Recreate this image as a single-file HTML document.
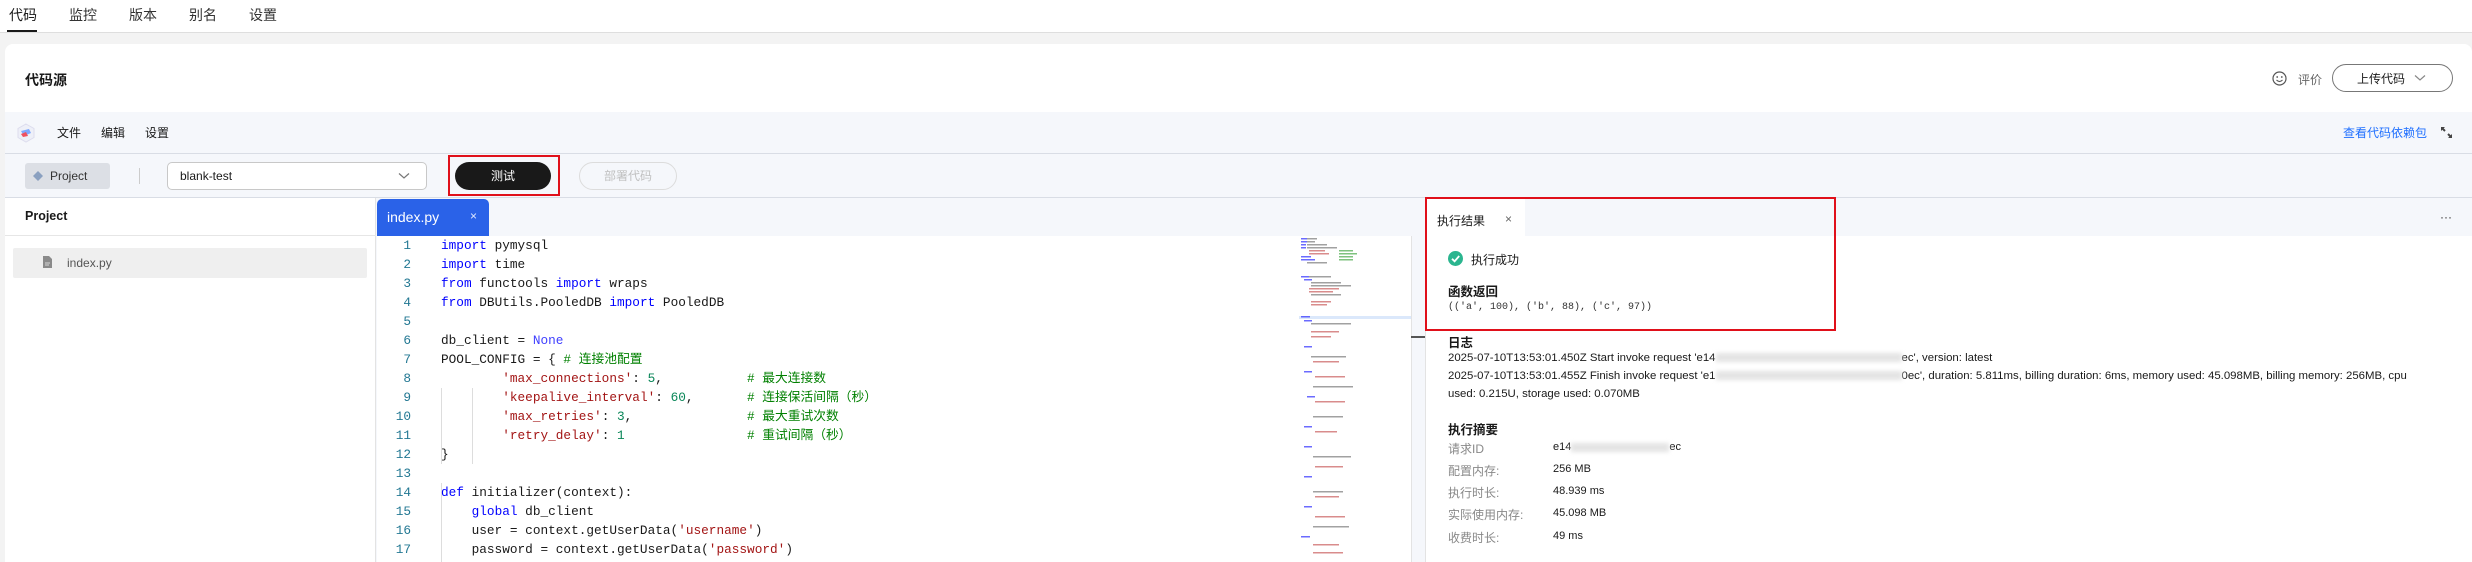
<!DOCTYPE html>
<html><head><meta charset="utf-8"><style>
*{margin:0;padding:0;box-sizing:border-box}
body{width:2472px;height:562px;overflow:hidden;background:#f3f3f3;font-family:"Liberation Sans","Noto Sans CJK SC",sans-serif;color:#191919;position:relative}
.a{position:absolute;white-space:nowrap}
.code{font-family:"Liberation Mono","Noto Sans CJK SC",monospace;font-size:12.75px;line-height:19px}
pre.a{white-space:pre}
.k{color:#0000ff}.s{color:#a31515}.n{color:#098658}.c{color:#008000}.nn{color:#4040ff}
.ln{color:#237893;text-align:right;width:40px;left:371px}
.lab{color:#888;font-size:12px}
.val{font-size:11px;color:#191919}
.lg{font-size:11.4px;color:#191919}
.bl{display:inline-block;vertical-align:middle;height:9px;background:#e4e4e4;filter:blur(2px)}
</style></head><body>
<!-- top tabs -->
<div class="a" style="left:0;top:0;width:2472px;height:33px;background:#fff;border-bottom:1px solid #dedede"></div>
<div class="a" style="left:9px;top:5px;font-size:14px;color:#191919">代码</div>
<div class="a" style="left:69px;top:5px;font-size:14px;color:#333">监控</div>
<div class="a" style="left:129px;top:5px;font-size:14px;color:#333">版本</div>
<div class="a" style="left:189px;top:5px;font-size:14px;color:#333">别名</div>
<div class="a" style="left:249px;top:5px;font-size:14px;color:#333">设置</div>
<div class="a" style="left:7px;top:30px;width:30px;height:2px;background:#191919"></div>

<!-- card -->
<div class="a" style="left:5px;top:44px;width:2467px;height:518px;background:#fff;border-radius:8px 8px 0 0"></div>
<div class="a" style="left:25px;top:70px;font-size:14px;font-weight:bold">代码源</div>
<svg class="a" style="left:2272px;top:71px" width="15" height="15" viewBox="0 0 15 15"><circle cx="7.5" cy="7.5" r="6.5" fill="none" stroke="#555" stroke-width="1.2"/><circle cx="5.2" cy="6" r=".9" fill="#555"/><circle cx="9.8" cy="6" r=".9" fill="#555"/><path d="M4.5 9 Q7.5 12 10.5 9" fill="none" stroke="#555" stroke-width="1.1"/></svg>
<div class="a" style="left:2298px;top:71px;font-size:12px;color:#666">评价</div>
<div class="a" style="left:2332px;top:64px;width:121px;height:28px;border:1px solid #777;border-radius:14px"></div>
<div class="a" style="left:2357px;top:70px;font-size:12px">上传代码</div>
<svg class="a" style="left:2414px;top:74px" width="12" height="8"><path d="M1 1.5 L6 6 L11 1.5" fill="none" stroke="#888" stroke-width="1.2"/></svg>

<!-- editor toolbar -->
<div class="a" style="left:5px;top:112px;width:2467px;height:450px;background:#f5f7fb"></div>
<svg class="a" style="left:17px;top:123px" width="18" height="20" viewBox="0 0 18 20"><path d="M9 1 L17 5.5 L17 14.5 L9 19 L1 14.5 L1 5.5Z" fill="#eef0f8" stroke="#dde"/><path d="M4 8 L12 6 L14 10 L7 13Z" fill="#7fa8ff"/><path d="M4 11 L9 9 L11 13 L6 14Z" fill="#f05060"/></svg>
<div class="a" style="left:57px;top:124px;font-size:12px">文件</div>
<div class="a" style="left:101px;top:124px;font-size:12px">编辑</div>
<div class="a" style="left:145px;top:124px;font-size:12px">设置</div>
<div class="a" style="left:2343px;top:124px;font-size:12px;color:#1e6fff">查看代码依赖包</div>
<svg class="a" style="left:2440px;top:126px" width="13" height="13"><path d="M1 1h4l-1.3 1.3 2 2-1.4 1.4-2-2L1 5z M12 12h-4l1.3-1.3-2-2 1.4-1.4 2 2L12 8z" fill="#444"/></svg>
<div class="a" style="left:5px;top:153px;width:2467px;height:1px;background:#d9dde5"></div>

<div class="a" style="left:25px;top:163px;width:85px;height:26px;background:#dcdfe5;border-radius:3px"></div>
<svg class="a" style="left:32px;top:170px" width="12" height="12"><path d="M6 1 L11 6 L6 11 L1 6Z" fill="#8aa0c0"/></svg>
<div class="a" style="left:50px;top:169px;font-size:12px;color:#333">Project</div>
<div class="a" style="left:139px;top:168px;width:1px;height:16px;background:#ccc"></div>
<div class="a" style="left:167px;top:162px;width:260px;height:28px;background:#fff;border:1px solid #c8c8c8;border-radius:5px"></div>
<div class="a" style="left:180px;top:169px;font-size:12px">blank-test</div>
<svg class="a" style="left:398px;top:172px" width="12" height="8"><path d="M1 1.5 L6 6 L11 1.5" fill="none" stroke="#777" stroke-width="1.2"/></svg>
<div class="a" style="left:448px;top:155px;width:112px;height:41px;border:2px solid #e0101a"></div>
<div class="a" style="left:455px;top:162px;width:96px;height:28px;background:#191919;border-radius:14px;color:#fff;font-size:12px;text-align:center;line-height:28px">测试</div>
<div class="a" style="left:579px;top:162px;width:98px;height:28px;border:1px solid #dcdcdc;border-radius:14px;color:#c0c0c0;font-size:12px;text-align:center;line-height:26px">部署代码</div>
<div class="a" style="left:5px;top:197px;width:2467px;height:1px;background:#d9dde5"></div>

<!-- project panel -->
<div class="a" style="left:5px;top:198px;width:371px;height:364px;background:#fff;border-right:1px solid #e3e3e3"></div>
<div class="a" style="left:25px;top:209px;font-size:12.5px;font-weight:bold">Project</div>
<div class="a" style="left:5px;top:235px;width:371px;height:1px;background:#e6e6e6"></div>
<div class="a" style="left:13px;top:248px;width:354px;height:30px;background:#efefef;border-radius:2px"></div>
<svg class="a" style="left:43px;top:256px" width="9" height="12"><path d="M0 0h6l3 3v9H0z" fill="#8a8a8a"/><path d="M2 7h5M2 9h4" stroke="#eee" stroke-width=".8"/></svg>
<div class="a" style="left:67px;top:256px;font-size:12px;color:#555">index.py</div>

<!-- editor -->
<div class="a" style="left:377px;top:236px;width:1034px;height:326px;background:#fff"></div>
<div class="a" style="left:377px;top:199px;width:112px;height:37px;background:#2a62e8;border-radius:5px 5px 0 0"></div>
<div class="a" style="left:387px;top:209px;font-size:14px;color:#fff">index.py</div>
<div class="a" style="left:470px;top:209px;font-size:12px;color:#dfe8ff">×</div>

<div class="a" style="left:441px;top:388px;width:1px;height:76px;background:#ddd"></div>
<div class="a" style="left:472px;top:388px;width:1px;height:76px;background:#ddd"></div>
<div class="a" style="left:441px;top:483px;width:1px;height:79px;background:#ddd"></div>

<div class="a code ln" style="top:236px;white-space:normal">1<br>2<br>3<br>4<br>5<br>6<br>7<br>8<br>9<br>10<br>11<br>12<br>13<br>14<br>15<br>16<br>17</div>
<pre class="a code" style="left:441px;top:236px"><span class="k">import</span> pymysql
<span class="k">import</span> time
<span class="k">from</span> functools <span class="k">import</span> wraps
<span class="k">from</span> DBUtils.PooledDB <span class="k">import</span> PooledDB

db_client = <span class="nn">None</span>
POOL_CONFIG = { <span class="c"># 连接池配置</span>
        <span class="s">'max_connections'</span>: <span class="n">5</span>,
        <span class="s">'keepalive_interval'</span>: <span class="n">60</span>,
        <span class="s">'max_retries'</span>: <span class="n">3</span>,
        <span class="s">'retry_delay'</span>: <span class="n">1</span>
}

<span class="k">def</span> initializer(context):
    <span class="k">global</span> db_client
    user = context.getUserData(<span class="s">'username'</span>)
    password = context.getUserData(<span class="s">'password'</span>)</pre>
<pre class="a code c" style="left:747px;top:369px"># 最大连接数
# 连接保活间隔（秒）
# 最大重试次数
# 重试间隔（秒）</pre>

<!-- minimap -->
<svg class="a" style="left:1299px;top:236px" width="112" height="326">
<rect x="0" y="80" width="112" height="3" fill="#dbe8fb"/>
<g fill="#3a3aff" opacity=".75">
<rect x="2" y="2" width="6" height="1.5"/><rect x="2" y="5" width="6" height="1.5"/><rect x="2" y="8" width="5" height="1.5"/><rect x="2" y="11" width="5" height="1.5"/>
<rect x="2" y="20" width="10" height="1.5"/><rect x="2" y="23" width="14" height="1.5"/>
<rect x="2" y="40" width="8" height="1.5"/><rect x="5" y="43" width="8" height="1.5"/>
<rect x="2" y="80" width="9" height="1.5"/><rect x="5" y="84" width="8" height="1.5"/>
<rect x="5" y="110" width="8" height="1.5"/><rect x="5" y="135" width="8" height="1.5"/><rect x="8" y="160" width="8" height="1.5"/>
<rect x="5" y="190" width="8" height="1.5"/><rect x="5" y="210" width="8" height="1.5"/><rect x="5" y="240" width="8" height="1.5"/><rect x="5" y="270" width="8" height="1.5"/><rect x="2" y="300" width="9" height="1.5"/>
</g>
<g fill="#555" opacity=".55">
<rect x="8" y="2" width="10" height="1.5"/><rect x="8" y="5" width="8" height="1.5"/><rect x="8" y="8" width="20" height="1.5"/><rect x="8" y="11" width="30" height="1.5"/>
<rect x="8" y="26" width="20" height="1.5"/><rect x="10" y="40" width="22" height="1.5"/><rect x="12" y="46" width="30" height="1.5"/><rect x="12" y="49" width="40" height="1.5"/>
<rect x="12" y="58" width="30" height="1.5"/><rect x="12" y="87" width="40" height="1.5"/><rect x="12" y="120" width="35" height="1.5"/><rect x="14" y="150" width="40" height="1.5"/>
<rect x="14" y="180" width="30" height="1.5"/><rect x="14" y="220" width="38" height="1.5"/><rect x="14" y="255" width="30" height="1.5"/><rect x="14" y="290" width="36" height="1.5"/>
</g>
<g fill="#c04040" opacity=".6">
<rect x="10" y="14" width="16" height="1.5"/><rect x="10" y="17" width="20" height="1.5"/><rect x="10" y="52" width="30" height="1.5"/><rect x="10" y="55" width="24" height="1.5"/>
<rect x="12" y="65" width="20" height="1.5"/><rect x="12" y="68" width="16" height="1.5"/><rect x="12" y="95" width="28" height="1.5"/><rect x="12" y="100" width="20" height="1.5"/>
<rect x="14" y="125" width="26" height="1.5"/><rect x="16" y="140" width="30" height="1.5"/><rect x="16" y="165" width="30" height="1.5"/><rect x="16" y="195" width="22" height="1.5"/>
<rect x="16" y="230" width="28" height="1.5"/><rect x="16" y="260" width="24" height="1.5"/><rect x="16" y="280" width="30" height="1.5"/><rect x="14" y="308" width="26" height="1.5"/><rect x="14" y="316" width="30" height="1.5"/>
</g>
<g fill="#2a9a2a" opacity=".6"><rect x="40" y="14" width="14" height="1.5"/><rect x="40" y="17" width="18" height="1.5"/><rect x="40" y="20" width="14" height="1.5"/><rect x="40" y="23" width="14" height="1.5"/></g>
</svg>
<div class="a" style="left:1411px;top:236px;width:1px;height:326px;background:#e3e3e3"></div>
<div class="a" style="left:1411px;top:336px;width:14px;height:2px;background:#555"></div>

<!-- result panel -->
<div class="a" style="left:1425px;top:236px;width:1047px;height:326px;background:#fff;border-left:1px solid #e3e3e3"></div>
<div class="a" style="left:1426px;top:199px;width:99px;height:37px;background:#fff"></div>
<div class="a" style="left:1437px;top:212px;font-size:12px">执行结果</div>
<div class="a" style="left:1505px;top:212px;font-size:12px;color:#666">×</div>
<div class="a" style="left:2440px;top:210px;font-size:12px;color:#333">···</div>
<div class="a" style="left:1425px;top:197px;width:411px;height:134px;border:2px solid #e0101a"></div>
<svg class="a" style="left:1448px;top:251px" width="15" height="15"><circle cx="7.5" cy="7.5" r="7.5" fill="#2bb58f"/><path d="M4 7.8 L6.6 10.3 L11.2 5" fill="none" stroke="#fff" stroke-width="1.8"/></svg>
<div class="a" style="left:1471px;top:251px;font-size:12px">执行成功</div>
<div class="a" style="left:1448px;top:281px;font-size:12.5px;font-weight:bold">函数返回</div>
<div class="a" style="left:1448px;top:302px;font-family:'Liberation Mono',monospace;font-size:10px;color:#333">(('a', 100), ('b', 88), ('c', 97))</div>
<div class="a" style="left:1448px;top:332px;font-size:12.5px;font-weight:bold">日志</div>
<div class="a lg" style="left:1448px;top:352px">2025-07-10T13:53:01.450Z Start invoke request 'e14<span class="bl" style="width:186px"></span>ec', version: latest</div>
<div class="a lg" style="left:1448px;top:370px">2025-07-10T13:53:01.455Z Finish invoke request 'e1<span class="bl" style="width:186px"></span>0ec', duration: 5.811ms, billing duration: 6ms, memory used: 45.098MB, billing memory: 256MB, cpu</div>
<div class="a lg" style="left:1448px;top:388px">used: 0.215U, storage used: 0.070MB</div>
<div class="a" style="left:1448px;top:419px;font-size:12.5px;font-weight:bold">执行摘要</div>
<div class="a lab" style="left:1448px;top:440px">请求ID</div>
<div class="a lab" style="left:1448px;top:462px">配置内存:</div>
<div class="a lab" style="left:1448px;top:484px">执行时长:</div>
<div class="a lab" style="left:1448px;top:506px">实际使用内存:</div>
<div class="a lab" style="left:1448px;top:529px">收费时长:</div>
<div class="a val" style="left:1553px;top:441px">e14<span class="bl" style="width:98px"></span>ec</div>
<div class="a val" style="left:1553px;top:463px">256 MB</div>
<div class="a val" style="left:1553px;top:485px">48.939 ms</div>
<div class="a val" style="left:1553px;top:507px">45.098 MB</div>
<div class="a val" style="left:1553px;top:530px">49 ms</div>
</body></html>
